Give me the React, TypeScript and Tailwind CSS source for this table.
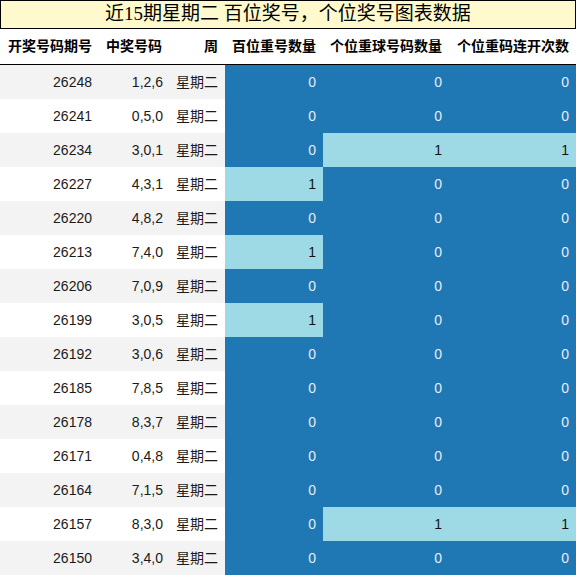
const rows: [string, string, number, number, number][] = [
  ["26248", "1,2,6", 0, 0, 0],
  ["26241", "0,5,0", 0, 0, 0],
  ["26234", "3,0,1", 0, 1, 1],
  ["26227", "4,3,1", 1, 0, 0],
  ["26220", "4,8,2", 0, 0, 0],
  ["26213", "7,4,0", 1, 0, 0],
  ["26206", "7,0,9", 0, 0, 0],
  ["26199", "3,0,5", 1, 0, 0],
  ["26192", "3,0,6", 0, 0, 0],
  ["26185", "7,8,5", 0, 0, 0],
  ["26178", "8,3,7", 0, 0, 0],
  ["26171", "0,4,8", 0, 0, 0],
  ["26164", "7,1,5", 0, 0, 0],
  ["26157", "8,3,0", 0, 1, 1],
  ["26150", "3,4,0", 0, 0, 0],
]

const headers = ["开奖号码期号", "中奖号码", "周", "百位重号数量", "个位重球号码数量", "个位重码连开次数"]

function ValueCell({ v }: { v: number }) {
  return (
    <div
      className={
        v > 0
          ? "flex items-center justify-end pr-[7px] bg-[#9edae5] text-[#111]"
          : "flex items-center justify-end pr-[7px] bg-[#1f77b4] text-[#e6eef5]"
      }
    >
      {v}
    </div>
  )
}

export default function App() {
  return (
    <div className="w-[576px] h-[576px] bg-white overflow-hidden font-['Liberation_Sans','Noto_Sans_CJK_SC',sans-serif] text-[14px] text-[#1a1a1a]">
      <div className="h-[29px] border border-black bg-[#fffacd] flex items-center justify-center text-[19px] text-black font-['Liberation_Serif','Noto_Sans_CJK_SC',serif]">
        近15期星期二 百位奖号，个位奖号图表数据
      </div>
      <div className="grid grid-cols-[99px_70px_56px_98px_126px_127px] h-[36px] border-b border-black font-bold text-[14px] text-black">
        {headers.map((h) => (
          <div key={h} className="flex items-center justify-end pr-[7px] whitespace-nowrap">
            {h}
          </div>
        ))}
      </div>
      <div className="grid grid-cols-[99px_70px_56px_98px_126px_127px] auto-rows-[34px]">
        {rows.map(([id, nums, a, b, c], i) => {
          const bg = i % 2 === 0 ? "bg-[#f3f3f3]" : "bg-white"
          return [
            <div key={id + "a"} className={`${bg} flex items-center justify-end pr-[7px]`}>{id}</div>,
            <div key={id + "b"} className={`${bg} flex items-center justify-end pr-[6px]`}>{nums}</div>,
            <div key={id + "c"} className={`${bg} flex items-center justify-end pr-[7px]`}>星期二</div>,
            <ValueCell key={id + "d"} v={a} />,
            <ValueCell key={id + "e"} v={b} />,
            <ValueCell key={id + "f"} v={c} />,
          ]
        })}
      </div>
    </div>
  )
}
